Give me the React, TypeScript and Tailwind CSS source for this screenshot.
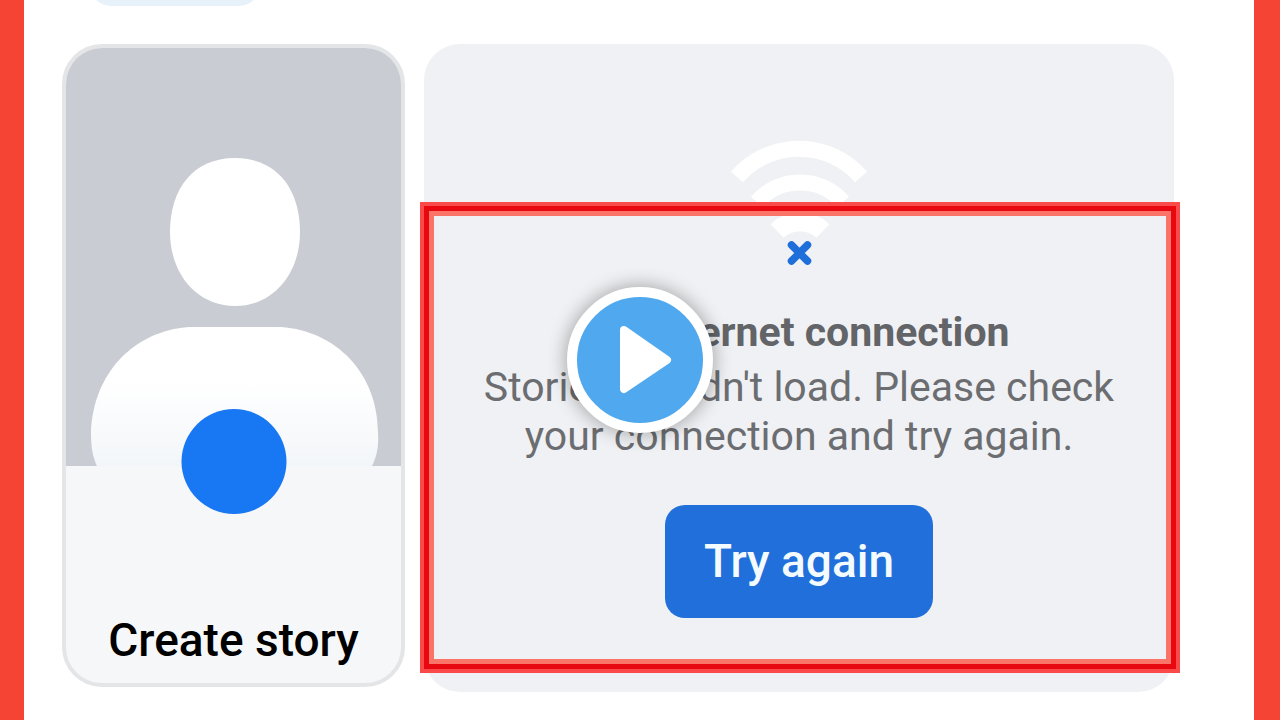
import { useState } from "react";

function Avatar() {
  return (
    <svg viewBox="0 0 335 418" className="block w-full" aria-hidden="true">
      <defs>
        <linearGradient id="shoulders" x1="0" y1="0" x2="0" y2="1">
          <stop offset="0.4" stopColor="#ffffff" />
          <stop offset="1" stopColor="#f3f6f9" />
        </linearGradient>
      </defs>
      <rect width="335" height="418" fill="#c9ccd3" />
      <path
        d="M169 110C211 110 234 141 234 184C234 226 207 258 169 258C131 258 104 226 104 184C104 141 127 110 169 110Z"
        fill="#ffffff"
      />
      <path
        d="M123 279H215C270 283 312 325 312 385C313 400 310 410 306 418H31C27 410 25 400 25 385C27 325 68 283 123 279Z"
        fill="url(#shoulders)"
      />
    </svg>
  );
}

function WifiOff() {
  return (
    <svg width="140" height="136" viewBox="0 0 140 136" fill="none" aria-hidden="true">
      <g stroke="#ffffff" strokeWidth="16">
        <path d="M8 41A82 82 0 0 1 132 41" />
        <path d="M28 66A57 57 0 0 1 114 66" />
        <path d="M48 95A33 33 0 0 1 94 95" strokeWidth="19" />
      </g>
      <path
        d="M62.500 109L78.500 125M78.500 109L62.500 125"
        stroke="#1f6fdb"
        strokeWidth="7.500"
        strokeLinecap="round"
      />
    </svg>
  );
}

function StoryCard() {
  return (
    <button
      type="button"
      className="w-[343px] shrink-0 overflow-hidden rounded-[40px] border-4 border-[#e4e5e7] bg-[#f6f7f9]"
    >
      <div className="relative">
        <Avatar />
        <span className="absolute -bottom-12 left-1/2 size-[105px] -translate-x-1/2 rounded-full bg-[#1877f2]" />
      </div>
      <span className="block pt-[150px] pb-[19px] text-[46px] leading-[48px] font-medium text-black">
        Create story
      </span>
    </button>
  );
}

function OfflineCard({ onRetry }: { onRetry: () => void }) {
  return (
    <section className="relative flex flex-1 flex-col items-center rounded-[36px] bg-[#f0f1f4] pt-[92px] pb-[74px] text-center">
      <WifiOff />
      <h2 className="mt-9 text-[41px] leading-[48px] font-bold text-[#626468]">
        No internet connection
      </h2>
      <p className="mt-[7px] px-12 text-[41px] leading-[49px] text-[#6b6d71]">
        Stories couldn't load. Please check your connection and try again.
      </p>
      <button
        type="button"
        onClick={onRetry}
        className="mt-11 w-[268px] rounded-[20px] bg-[#216fdb] py-8 text-[46px] leading-[49px] font-medium text-[#f4fbff]"
      >
        Try again
      </button>

      {/* highlight frame */}
      <div className="pointer-events-none absolute top-[158px] -right-1.5 bottom-[19px] -left-1 border-4 border-[#fb4a4a]">
        <div className="h-full border-5 border-[#e8080f]">
          <div className="h-full border-5 border-[#fb7468]" />
        </div>
      </div>
    </section>
  );
}

export default function App() {
  const [playing, setPlaying] = useState(false);

  return (
    <main className="relative min-h-screen border-r-[26px] border-l-[24px] border-[#f54334] bg-white font-[Roboto,sans-serif]">
      <div className="h-11 pl-16">
        <div className="flex h-1.5 items-end overflow-hidden">
          <div className="h-12 w-[174px] shrink-0 rounded-full bg-[#e7f1fa]" />
        </div>
      </div>

      <div className="flex items-start gap-[19px] pr-20 pl-[38px]">
        <StoryCard />
        <OfflineCard onRetry={() => setPlaying(false)} />
      </div>

      <div className="pointer-events-none absolute inset-y-0 -right-[26px] -left-6 flex items-center justify-center">
        <button
          type="button"
          aria-label="Play"
          aria-pressed={playing}
          onClick={() => setPlaying(!playing)}
          className="pointer-events-auto size-[146px] rounded-full border-10 border-white bg-[#50a9ee] shadow-[0_0_18px_2px_rgba(0,0,0,0.3)]"
        >
          <svg viewBox="0 0 126 126" className="block size-full" aria-hidden="true">
            <path
              d="M47 33L90 63L47 92Z"
              fill="#ffffff"
              stroke="#ffffff"
              strokeWidth="8"
              strokeLinejoin="round"
            />
          </svg>
        </button>
      </div>
    </main>
  );
}
